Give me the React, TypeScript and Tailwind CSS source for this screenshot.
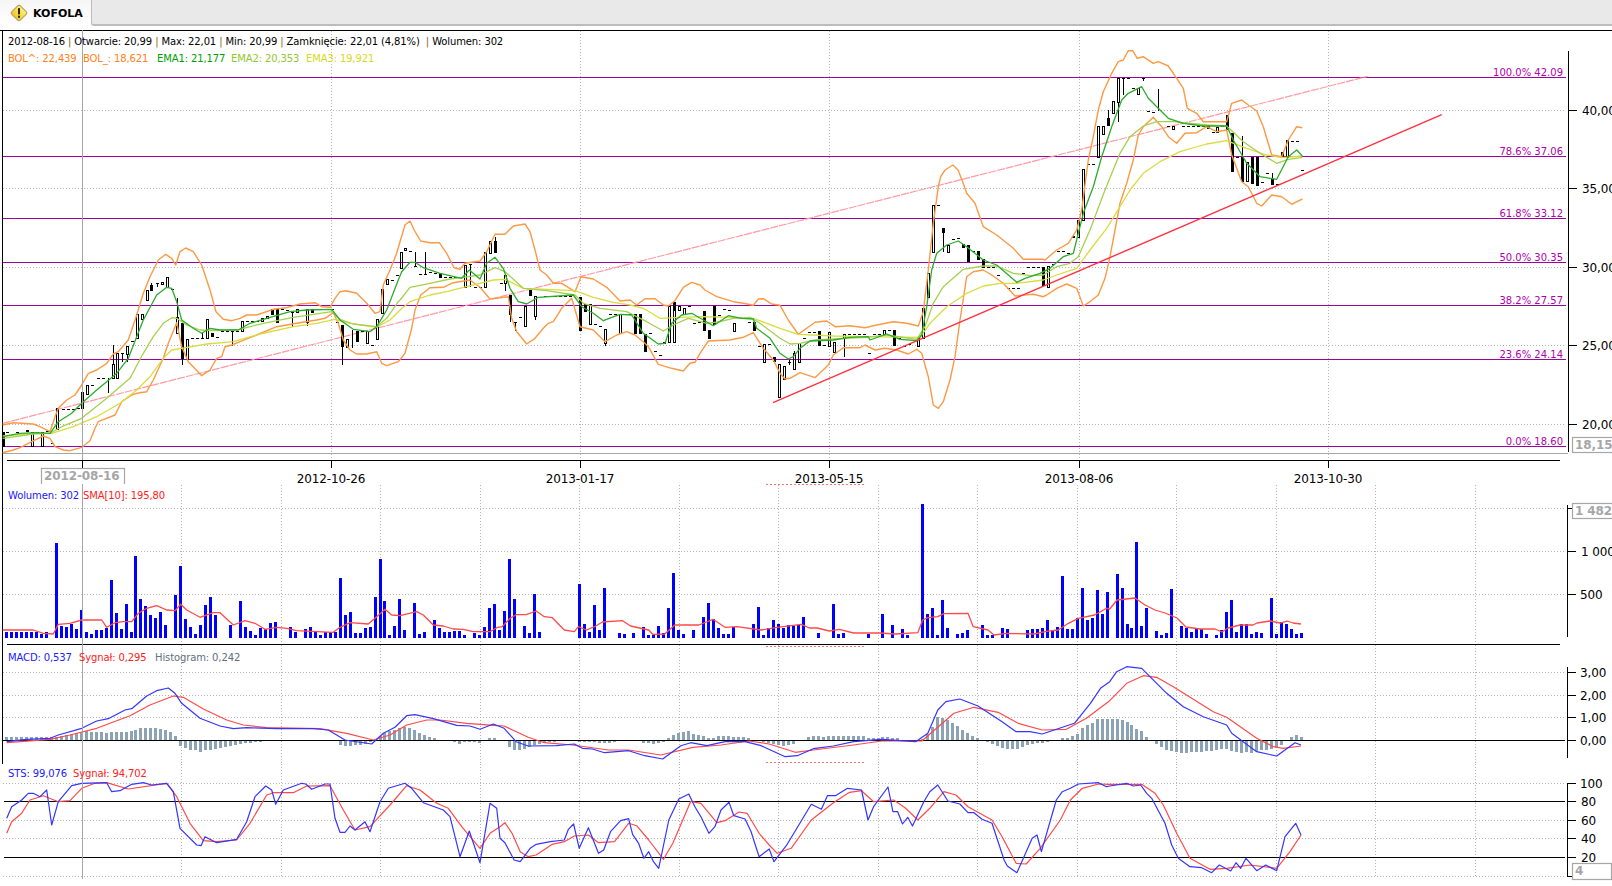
type Seg = [number, number, number, number, number[]]
type Mark = ["h" | "f" | "w" | "d", number, number, number?]

// each traced piece is [x0, y0, scaleX, scaleY, flat x,y list]; points that don't move right are dropped
function trace(...segs: Seg[]) {
  const out: string[] = []
  let last = -1
  for (const [x0, y0, kx, ky, p] of segs) {
    for (let i = 0; i < p.length; i += 2) {
      const x = x0 + p[i] / kx
      if (x <= last) continue
      last = x
      out.push(`${x.toFixed(1)},${(y0 + p[i + 1] / ky).toFixed(1)}`)
    }
  }
  return out.join(" ")
}

const bolUp = trace(
  [0, 230, 3, 3, [8,585,40,578,100,582,120,590,150,605,165,560,175,535,200,510,225,495,245,465,265,430,290,420,320,400,340,372,355,365,385,330,410,255,430,190,450,140,475,90,497,73,515,85,527,105,540,65,557,54,580,65,605,105,630,180,648,245,670,268,695,272,720,265,740,255,770,255,820,238,860,233,900,222,945,218,965,230,990,232,1005,205,1020,185,1037,182,1070,190,1100,220,1125,250,1140,245,1150,165,1170,120,1190,70]],
  [380, 200, 3, 3, [60,125,75,75,90,63,105,95,122,123,150,128,178,128,200,160,222,203,240,208,255,190,300,183,320,155,345,103,375,103,400,78,435,72,450,95,465,150,480,210,500,225,520,250,545,250,585,275,603,230,640,237,680,262,720,303,750,300,770,315,795,296,825,296,850,315,865,318,885,302,910,262,935,247,960,255,975,270,1010,290,1060,305,1090,310,1120,316,1135,297,1150,296,1175,312,1200,316]],
  [700, 180, 3, 3, [240,375,265,420,295,463,320,445,345,427,380,423,405,440,450,437,495,443,530,435,580,425,620,430,655,438,670,395,685,270,700,130,715,20,722,-10,735,-30,759,-45,774,-30,786,0,800,40,825,70,850,140,890,165,940,205,970,238,1030,238]],
  [1040, 40, 3, 3, [15,660,50,630,85,610,110,570,125,510,145,360,160,290,175,210,190,155,215,100,235,65,250,60,265,32,278,32,292,55,310,50,340,70,355,65,385,78,410,115,430,145,442,205,470,220,490,245,560,245,575,190,605,180,625,195,650,213,670,260,695,345,725,350,745,300,770,260,787,263]],
)

const bolLow = trace(
  [0, 400, 3, 3, [8,158,40,150,60,143,95,125,130,108,150,115,165,140,190,150,210,152,245,142,270,122,285,85,295,65,345,45,365,5]],
  [0, 230, 3, 3, [395,495,410,490,440,485,460,450,490,385,505,340,530,278,545,350,565,395,605,437,630,420,650,385,665,380,675,350,695,345,720,335,770,315,830,290,890,280,950,270,975,265,1000,248,1015,280,1030,330,1050,360,1070,372,1100,372,1130,365,1145,400,1160,407,1195,395]],
  [380, 200, 3, 3, [75,460,95,385,105,330,122,285,150,263,190,262,220,248,270,240,300,262,330,297,385,290,395,355,410,395,440,432,465,415,490,385,505,370,520,365,545,325,575,295,600,380,640,390,675,425,710,405,740,395,765,405,795,430,805,440,835,493,875,505,910,513,930,490,945,487,960,460,985,423,1050,420,1090,412,1120,398,1150,445,1180,480,1200,520]],
  [700, 180, 3, 3, [255,597,270,595,300,578,345,593,385,555,400,525,430,503,480,503,495,495,525,510,555,505,590,510,625,522,650,508,665,520,685,590,700,675,715,685,730,665,750,600,765,530,780,420,800,290,820,275,850,270,875,285,910,310,945,348,1000,343,1030,350]],
  [1040, 40, 3, 3, [20,765,50,745,80,732,110,745,130,798,150,785,175,765,195,715,210,650,225,570,240,490,260,430,280,360,295,285,310,260,340,232,365,260,385,290,410,310,435,280,470,278,500,260,530,275,560,270,575,345,605,425,625,440,650,490,665,498,695,465,725,470,755,493,787,477]],
)

const ema1 = trace(
  [0, 230, 3, 3, [8,620,60,610,110,608,150,610,175,575,215,550,245,520,290,480,320,455,350,430,385,385,410,320,430,270,470,195,500,172,515,175,530,215,545,270,580,295,605,310,630,295,660,300,715,300,750,280,800,265,870,245,920,240,995,238,1020,270,1060,298,1110,305,1130,290,1160,240,1195,150]],
  [380, 200, 3, 3, [65,215,90,187,105,187,130,203,180,220,245,235,268,210,300,237,320,190,345,172,370,205,390,265,415,305,440,312,475,292,580,285,605,320,640,340,670,362,720,343,755,345,790,400,835,432,855,430,875,370,905,345,935,340,1000,377,1045,347,1085,355,1120,357,1130,385,1170,415,1200,460]],
  [700, 180, 3, 3, [265,537,280,530,300,505,330,483,400,480,450,472,505,470,510,480,560,462,600,478,650,482,665,465,680,380,695,270,710,220,740,195,775,183,800,200,850,240,890,255,950,307,975,295,1020,280]],
  [1040, 40, 3, 3, [30,685,70,650,100,640,130,520,160,440,185,350,215,260,245,180,265,160,305,140,325,175,360,210,385,235,430,250,490,258,560,258,580,300,620,370,660,410,710,418,745,350,770,330,787,348]],
)

const ema2 = trace(
  [0, 230, 3, 3, [8,625,100,612,150,610,185,590,245,565,320,505,390,445,430,370,460,320,490,280,515,263,530,265,560,285,600,300,650,302,720,298,790,280,880,262,960,250,995,245,1020,268,1060,282,1130,290,1160,265,1195,215]],
  [380, 200, 3, 3, [60,300,90,262,150,250,210,237,250,232,300,225,345,203,375,215,430,265,500,272,585,285,610,310,660,325,740,335,800,365,850,393,880,375,925,355,980,370,1020,365,1060,355,1110,352,1140,370,1200,415]],
  [700, 180, 3, 3, [270,492,300,490,345,480,430,475,500,472,560,465,650,478,675,440,700,370,730,320,790,268,850,258,890,258,940,280,990,287,1030,285]],
  [1040, 40, 3, 3, [50,680,90,670,115,650,150,570,195,450,240,340,270,290,310,258,350,245,400,245,500,255,560,258,610,305,660,340,710,370,745,358,787,352]],
)

const ema3 = trace(
  [0, 230, 3, 3, [8,618,100,610,155,610,220,590,290,560,360,520,410,480,450,440,490,385,515,360,545,355,620,342,700,335,780,312,880,290,950,280,1005,268,1050,280,1130,292,1170,270,1195,245]],
  [380, 200, 3, 3, [60,330,90,305,150,285,200,275,250,262,300,250,340,240,375,238,430,265,500,268,585,272,640,292,700,307,750,315,790,325,840,355,900,352,970,350,1060,352,1120,355,1200,385]],
  [700, 180, 3, 3, [295,463,400,468,500,470,660,472,690,430,740,380,800,340,850,318,900,310,950,310,1030,300]],
  [1040, 40, 3, 3, [50,705,110,685,150,630,200,565,240,500,270,450,310,400,360,365,420,335,500,312,560,302,620,325,680,345,725,353,787,348]],
)

const sma = trace(
  [0, 400, 3, 3, [8,690,40,690,100,690,130,700,160,702,175,673,210,670,245,660,305,660,320,682,345,668,370,665,395,665,415,640,440,625,470,617,500,630,525,632,542,613,560,630,600,652,640,638,660,638,700,675,735,662,765,670,795,688,830,682,860,685,890,692,950,695,1000,697,1020,682,1050,668,1105,672,1130,650,1155,628,1175,645,1200,647,1250,635,1270,645,1300,675,1330,678,1360,687,1390,688,1420,695,1470,695,1490,683]],
  [480, 490, 2.49, 3, [55,410,75,385,90,374,115,374,140,363,160,380,180,383,210,420,235,425,245,410,265,420,285,410,305,396,355,392,375,408,420,420,430,433,460,432,485,405,545,405,580,388,610,412,640,410,700,420,740,412,800,403,820,414,840,414,870,423,895,418,930,429,995,429,1035,432,1090,428,1102,390,1115,383,1140,380,1155,371,1215,370,1228,410,1265,420,1280,435,1310,430,1380,432,1410,424,1440,420,1465,400,1490,385,1530,375,1560,355,1568,357]],
  [0, 0, 1, 1, [1117,600,1135,598,1145,605,1155,610,1165,613,1177,618,1186,627,1200,629,1215,629,1222,632,1228,628,1240,625,1253,625,1257,623,1270,621,1280,623,1287,621,1293,623,1301,624]],
)

const macd = trace(
  [0, 620, 3, 3, [20,365,80,358,150,355,175,345,245,325,290,303,325,296,375,270,395,266,440,228,470,212,505,204,525,220,545,250,600,295,660,318,700,326,740,323,830,326,940,326,985,330,1035,360,1115,372,1150,340,1185,322,1220,287,1245,284,1300,296,1370,316,1410,318,1440,328,1480,312]],
  [480, 660, 2.49, 3, [60,205,90,245,120,258,190,257,235,252,255,265,280,267,310,278,370,272,410,287,455,297,500,257,525,248,565,257,610,245,660,245,700,257,760,290,790,287,830,266,880,258,930,245,1000,238,1085,245,1115,220,1140,150,1160,125,1195,117,1240,138,1300,185,1335,215,1370,215,1400,222,1480,190,1520,130,1545,85,1568,65]],
  [1100, 620, 3, 3, [50,155,80,140,125,145,200,220,250,260,310,290,380,315,395,340,470,395,530,408,585,368,603,375]],
)

const macdSig = trace(
  [0, 620, 3, 3, [20,368,150,358,210,345,290,325,390,287,450,255,520,228,550,232,610,267,680,300,730,315,800,323,960,326,1040,340,1120,360,1170,345,1220,315,1280,300,1320,300,1400,310,1480,316]],
  [480, 660, 2.49, 3, [60,198,120,232,160,248,230,255,320,270,370,270,450,285,530,262,600,255,670,243,720,252,785,277,830,270,930,255,1000,243,1100,243,1180,160,1230,142,1290,157,1340,190,1400,210,1460,208,1510,175,1568,122]],
  [1100, 620, 3, 3, [80,190,130,167,170,172,220,200,340,275,380,292,470,355,520,380,550,385,603,378]],
)

const sts = trace(
  [0, 620, 3, 3, [20,595,35,560,65,540,85,520,100,520,120,530,140,510,155,615,175,545,215,497,245,490,320,488,335,515,360,512,395,493,430,488,455,495,500,490,520,515,540,625,590,675,603,677,615,650,650,668,710,658,740,605,765,530,797,498,815,510,827,553,850,510,905,490,917,492,935,508,975,492,990,492,1005,595,1020,637,1035,637,1050,618,1065,630,1095,605,1110,635,1140,545,1165,505,1215,490,1235,505,1270,548,1330,570,1350,590,1380,710,1408,633,1440,728,1470,550,1490,565,1500,655]],
  [480, 660, 2.49, 3, [62,548,85,600,100,605,125,565,140,553,175,545,210,540,220,508,233,492,247,565,270,503,295,580,308,570,325,515,350,482,370,476,380,523,395,550,408,595,420,575,432,605,445,625,470,480,495,417,520,402,535,440,550,470,570,520,585,500,600,450,620,427,632,467,660,477,675,515,695,590,720,567,732,605,765,553,825,433,850,448,865,407,885,407,915,385,950,390,966,480,980,440,1016,381,1028,455,1040,455,1052,492,1065,472,1077,498,1105,425,1120,395,1140,375,1165,423,1195,432,1215,458,1230,458,1250,478,1275,490,1305,600,1313,618,1337,638,1375,535,1387,525,1398,575,1435,420,1450,395,1470,385,1490,372,1540,368,1560,380,1568,378]],
  [1100, 620, 3, 3, [80,490,100,498,122,495,140,520,155,535,195,610,215,675,235,715,270,740,305,743,335,758,358,735,392,753,408,728,422,745,438,715,470,752,497,735,530,752,555,650,587,610,603,645]],
)

const stsSig = trace(
  [0, 620, 3, 3, [20,640,35,605,65,580,90,540,130,527,175,545,210,542,245,505,285,490,320,488,385,507,500,490,530,530,570,610,610,662,650,665,710,660,750,610,800,525,820,518,880,518,920,498,990,497,1030,570,1065,630,1110,620,1170,555,1220,497,1260,510,1310,550,1345,565,1385,620,1440,685,1470,640,1500,620]],
  [480, 660, 2.49, 3, [62,488,80,520,100,575,120,590,140,585,180,553,210,545,235,528,270,525,295,548,335,545,370,490,390,497,420,540,457,598,480,550,525,424,550,430,590,488,610,482,645,456,665,460,695,520,720,555,740,580,775,565,825,480,880,428,920,397,950,392,980,425,1030,420,1060,445,1090,480,1120,445,1155,395,1185,405,1215,440,1275,480,1300,530,1335,610,1360,612,1395,565,1445,480,1470,420,1500,385,1540,372,1568,373]],
  [1100, 620, 3, 3, [60,493,125,493,165,520,190,555,230,640,270,715,330,748,380,745,450,735,530,745,570,695,603,645]],
)

const volume = [
  6,6,6,6,6,6,6,4,6,0,95,12,11,14,9,28,6,4,8,8,10,58,25,9,34,6,82,39,32,23,20,26,13,0,43,72,19,11,4,13,
  33,41,23,0,0,13,0,37,11,7,3,10,9,15,16,0,0,11,6,0,9,11,7,3,6,6,6,60,23,26,5,5,10,11,41,79,37,3,12,39,
  8,0,35,4,6,0,18,10,6,6,7,7,3,0,5,3,11,30,34,8,27,79,39,0,12,5,44,6,0,0,0,0,0,0,0,54,14,6,33,8,
  50,0,0,5,4,0,5,0,11,3,3,12,5,30,65,8,4,0,8,0,21,35,19,10,4,4,11,0,0,0,14,31,3,10,18,14,10,13,12,13,
  21,0,0,5,0,0,34,4,5,0,0,0,0,4,0,0,24,0,13,0,9,3,0,0,134,24,30,3,38,10,0,4,5,8,0,0,13,3,3,0,
  10,9,0,0,0,8,9,9,10,18,8,11,62,9,9,20,50,18,20,48,24,46,0,64,50,14,10,96,12,30,0,7,3,5,49,0,12,10,6,9,
  9,4,0,3,8,26,38,6,14,14,4,6,5,0,40,4,16,14,9,4,5,
]

const hist = [
  3,3,3,3,3,3,3,3,3,3,3,4,5,6,7,8,9,8,8,8,7,8,8,8,8,9,10,12,12,12,12,11,10,8,4,-6,-8,-10,-10,-12,
  -10,-10,-9,-8,-7,-6,-5,-4,-3,-3,-2,-2,-1,0,-1,0,0,0,0,0,0,0,0,0,0,0,-1,-5,-6,-6,-5,-5,-4,-2,0,4,7,9,10,12,
  13,12,10,7,5,3,2,0,0,-1,-2,-4,-2,-2,-2,-3,-1,2,2,0,-1,-7,-10,-10,-9,-7,-5,-4,-3,-2,-2,-1,0,0,0,-2,-2,-2,-2,-3,
  -3,-3,-2,0,0,0,0,0,-3,-3,-4,-3,-2,2,5,7,8,9,6,5,4,2,2,4,4,4,3,3,3,2,0,-1,-2,-3,-4,-5,-6,-5,-4,-1,
  0,3,4,4,3,4,4,4,4,4,4,4,4,2,2,2,3,3,2,2,0,0,0,0,1,6,13,23,22,20,17,14,10,7,4,2,0,-2,-4,-6,
  -8,-9,-9,-9,-7,-5,-4,-3,-3,-2,-1,0,2,2,4,6,12,15,17,21,21,21,21,21,20,18,15,11,9,3,0,-4,-7,-10,-11,-12,-13,-13,-12,-12,
  -12,-11,-11,-10,-9,-9,-11,-12,-13,-12,-13,-11,-10,-10,-9,-8,-5,0,3,5,3,
]

const marks: [number, number, Mark[]][] = [
  [0, 230, [
    ["f",9,605,650],["d",22,607],["f",52,606,609],["f",82,601,605],["d",112,607],["d",142,602],["h",97,607,647],["h",127,607,647],["d",157,640],
    ["h",172,535,597],["d",188,538],["d",203,538],["d",218,538],["d",233,535],["f",247,487,537],["h",262,465,492],["d",277,465],["d",293,445],["d",308,445],["w",323,445,490],
    ["w",338,345,403],["h",338,403,445],["h",352,370,445],["w",367,370,395],["d",367,370],["h",382,347,372],["w",382,372,395],["d",397,333],["h",412,253,325],["h",425,253,267],
    ["h",440,180,210],["f",454,165,183],["w",454,160,165],["w",470,158,170],["d",470,158],["h",485,157,163],["h",500,140,170],["d",515,178],["w",530,205,260],["h",530,260,310],
    ["f",545,280,388],["w",545,388,405],["h",560,328,388],["f",575,323,328],["d",590,323],["w",605,310,325],["d",605,323],["h",620,268,325],["f",635,308,320],["d",650,320],
    ["d",665,302],["d",680,302],["w",695,302,348],["d",695,302],["d",710,302],["h",725,272,302],["d",740,272],["d",755,272],["d",770,272],["h",785,265,272],["h",800,259,265],
    ["f",815,238,255],["f",830,238,280],["d",845,238],["d",860,240],["w",875,245,290],["d",875,245],["h",890,238,245],["d",905,240],["h",920,238,275],["w",920,275,288],["f",935,238,248],
    ["d",950,238],["d",965,238],["d",980,238],["d",995,238],["d",1010,277],["f",1025,285,352],["w",1025,352,405],["h",1040,328,350],["w",1055,300,355],["f",1070,302,335],["d",1085,302],
    ["h",1100,302,340],["d",1115,345],["h",1130,268,328],["h",1145,178,248],["h",1160,148,162],["d",1175,150],
  ]],
  [380, 200, [
    ["d",50,225],["h",62,157,203],["h",76,145,151],["d",90,153],["w",106,155,200],["f",105,197,202],["d",120,222],["w",136,157,222],["d",136,222],["d",150,217],["f",166,220,223],["f",180,218,233],
    ["d",195,232],["d",210,232],["d",226,232],["d",240,232],["h",255,195,260],["w",270,192,260],["d",270,192],["d",285,260],["d",300,260],["h",316,155,260],["h",331,122,160],["f",346,122,158],["w",346,112,122],
    ["d",362,250],["h",376,225,250],["w",376,250,272],["f",391,285,345],["w",391,345,365],["w",406,365,393],["d",406,365],["d",421,352],["h",436,317,377],["f",451,270,288],["h",466,287,348],["w",466,348,360],
    ["d",495,287],["d",510,287],["d",525,287],["d",540,287],["d",555,287],["d",570,287],["f",601,290,392],["f",616,312,335],["h",631,312,373],["d",646,373],["d",661,377],["h",676,388,430],["w",676,430,437],
    ["d",691,343],["d",706,343],["h",721,343,400],["d",736,343],["d",751,343],["f",766,343,402],["f",781,343,402],["f",796,402,455],["d",811,398],["d",826,453],["d",840,466],["f",852,425,433],["h",868,318,425],
    ["f",883,305,330],["h",883,330,425],["h",898,318,330],["h",913,325,343],["d",928,318],["d",943,370],["d",958,367],["f",973,332,392],["f",988,390,417],["f",1003,318,375],["d",1018,345],["d",1033,328],["d",1048,330],
    ["h",1063,370,392],["d",1108,367],["f",1123,367,393],["d",1138,438],["h",1153,433,485],["d",1168,433],["f",1183,472,485],
  ]],
  [700, 180, [
    ["h",238,553,652],["h",253,558,598],["w",268,540,555],["d",268,547],["h",283,520,568],["w",283,513,520],["h",298,488,545],["d",313,475],["d",328,455],["d",343,455],["f",358,453,497],["d",373,495],["h",388,455,497],["h",403,487,515],
    ["d",418,475],["h",433,463,475],["w",433,475,530],["d",448,463],["d",463,463],["d",478,463],["d",493,463],["d",508,520],["d",523,463],["d",538,463],["h",553,450,463],["d",568,450],["f",583,450,497],["d",598,473],["d",613,497],["d",628,493],
    ["h",655,470,497],["h",670,385,475],["h",685,280,350],["h",700,75,215],["d",715,75],["f",730,145,158],["w",730,158,215],["h",745,195,215],["d",760,177],["d",775,173],["f",790,193,205],["f",805,195,245],["d",820,213],
    ["f",835,213,240],["f",850,238,265],["d",865,262],["d",880,262],["d",895,285],["d",910,308],["d",925,323],["d",940,325],["d",955,325],["d",970,280],["d",985,262],["d",1000,262],["d",1015,262],
  ]],
  [1040, 40, [
    ["f",10,680,738],["h",25,677,740],["d",40,673],["d",55,633],["d",70,633],["d",85,640],["f",100,589,593],["h",115,540,590],["h",130,388,540],["d",145,372],["d",160,372],["h",175,257,352],["h",190,258,282],
    ["f",205,233,258],["w",205,210,233],["h",220,183,218],["h",235,115,185],["w",235,185,245],["w",250,115,165],["d",250,115],["d",265,115],["d",280,145],["h",295,143,163],["w",310,115,122],["d",310,115],["d",325,213],["d",340,215],["w",355,148,213],
    ["d",370,242],["f",385,257,262],["h",400,258,268],["d",430,258],["d",445,258],["d",460,258],["d",475,258],["d",490,258],["f",503,255,268],["d",518,275],["h",532,260,277],["d",547,258],["f",562,225,270],["f",577,280,395],["d",592,352],
    ["w",607,288,352],["f",607,352,425],["h",622,365,422],["f",637,352,433],["f",652,350,437],["d",667,425],["d",682,400],["f",697,418,435],["w",697,400,418],["d",712,433],["f",727,335,352],["h",742,300,350],["d",757,303],["d",772,303],["d",787,390],
  ]],
]

const fib = [
  [77, "100.0% 42.09"],
  [156, "78.6% 37.06"],
  [218, "61.8% 33.12"],
  [262, "50.0% 30.35"],
  [305, "38.2% 27.57"],
  [359, "23.6% 24.14"],
  [446, "0.0% 18.60"],
] as const

const priceGrid: [number, string][] = [[110, "40,00"], [188, "35,00"], [267, "30,00"], [345, "25,00"], [424, "20,00"]]
const mainCols = [331, 580, 829, 1079, 1328]
const dates = ["2012-10-26", "2013-01-17", "2013-05-15", "2013-08-06", "2013-10-30"]
const subCols = Array.from({ length: 14 }, (_, i) => Math.round(181 + 99.5 * i))

const GREY = "#a6a6a6"
const DOT = "#b4b4b4"

function HDot({ y, x1 = 3, x2 = 1566 }: { y: number; x1?: number; x2?: number }) {
  return <line x1={x1} x2={x2} y1={y + 0.5} y2={y + 0.5} stroke={DOT} strokeDasharray="1 2" />
}

function VDot({ x, y1, y2 }: { x: number; y1: number; y2: number }) {
  return <line x1={x + 0.5} x2={x + 0.5} y1={y1} y2={y2} stroke={DOT} strokeDasharray="1 2" />
}

function Rule({ x1, y1, x2, y2, color = "#000" }: { x1: number; y1: number; x2: number; y2: number; color?: string }) {
  return <line x1={x1} y1={y1} x2={x2} y2={y2} stroke={color} shapeRendering="crispEdges" />
}

function Curve({ points, color, width = 1.2 }: { points: string; color: string; width?: number }) {
  return <polyline points={points} fill="none" stroke={color} strokeWidth={width} strokeLinejoin="round" />
}

function AxisLabel({ x, y, children }: { x: number; y: number; children: string }) {
  return (
    <text x={x} y={y + 5} fill="#000" className="text-[12px]">
      {children}
    </text>
  )
}

function GreyBox({ x, y, w, h, children, open }: { x: number; y: number; w: number; h: number; children: string; open?: boolean }) {
  return (
    <g>
      <rect x={x + 0.5} y={y + 0.5} width={w} height={open ? h + 4 : h} fill="#fff" stroke={GREY} strokeWidth={1.2} />
      <text x={x + 3} y={y + 12} fill={GREY} className="text-[12px] font-bold">
        {children}
      </text>
    </g>
  )
}

function Candles() {
  const shapes: React.ReactNode[] = []
  marks.forEach(([x0, y0, list], s) =>
    list.forEach(([kind, mx, a, b], i) => {
      const x = Math.round(x0 + mx / 3)
      const top = Math.round(y0 + a / 3)
      const bot = b === undefined ? top : Math.round(y0 + b / 3)
      const key = `${s}-${i}`
      if (kind === "h") shapes.push(<rect key={key} x={x - 0.5} y={top + 0.5} width={2} height={bot - top} fill="none" stroke="#000" />)
      if (kind === "f") shapes.push(<rect key={key} x={x - 1} y={top} width={3} height={bot - top} fill="#000" />)
      if (kind === "w") shapes.push(<rect key={key} x={x} y={top} width={1} height={bot - top} fill="#000" />)
      if (kind === "d") shapes.push(<rect key={key} x={x - 1} y={top} width={3} height={1} fill="#000" />)
    }),
  )
  return <g shapeRendering="crispEdges">{shapes}</g>
}

function MainChart() {
  return (
    <svg className="block" width={1612} height={454} viewBox="0 30 1612 454">
      {priceGrid.map(([y]) => <HDot key={y} y={y} />)}
      {mainCols.map((x) => <VDot key={x} x={x} y1={31} y2={460} />)}
      <Rule x1={0} y1={30.5} x2={1612} y2={30.5} />
      <Rule x1={2.5} y1={30} x2={2.5} y2={484} />
      {fib.map(([y, label]) => (
        <g key={y}>
          <Rule x1={3} y1={y + 0.5} x2={1566} y2={y + 0.5} color="#a000a0" />
          <text x={1563} y={y - 1} textAnchor="end" fill="#b000b0" className="text-[10px] tracking-[0px]">
            {label}
          </text>
        </g>
      ))}
      <line x1={2.7} y1={423.3} x2={1367.7} y2={76.3} stroke="#ff9aa3" strokeWidth={1.2} strokeDasharray="8 1" />
      <Candles />
      <Curve points={bolUp} color="#fb9a45" width={1.4} />
      <Curve points={bolLow} color="#fb9a45" width={1.4} />
      <Curve points={ema3} color="#d9dc3f" width={1.3} />
      <Curve points={ema2} color="#a5d04e" width={1.3} />
      <Curve points={ema1} color="#2cab2c" width={1.3} />
      <line x1={773} y1={402.7} x2={1441.7} y2={114.7} stroke="#ff3040" strokeWidth={1.4} />
      <Rule x1={82.5} y1={30} x2={82.5} y2={484} color={GREY} />
      <Rule x1={3} y1={453.5} x2={1568} y2={453.5} color={GREY} />
      <Rule x1={1568.5} y1={51} x2={1568.5} y2={452} />
      {priceGrid.map(([y, label]) => (
        <g key={y}>
          <Rule x1={1568} y1={y + 0.5} x2={1577} y2={y + 0.5} />
          <AxisLabel x={1582} y={y}>{label}</AxisLabel>
        </g>
      ))}
      <Rule x1={7} y1={460.5} x2={1560} y2={460.5} />
      {[82, ...mainCols].map((x) => <Rule key={x} x1={x + 0.5} y1={460} x2={x + 0.5} y2={468} />)}
      {mainCols.map((x, i) => (
        <text key={x} x={x} y={483} textAnchor="middle" fill="#000" className="text-[12px] tracking-[-0.1px]">
          {dates[i]}
        </text>
      ))}
      <GreyBox x={1572} y={437} w={44} h={15}>18,15</GreyBox>
      <GreyBox x={41} y={468} w={83} h={16} open>2012-08-16</GreyBox>
    </svg>
  )
}

function VolumeChart() {
  return (
    <svg className="block" width={1612} height={160} viewBox="0 484 1612 160">
      {[508, 551, 594].map((y) => <HDot key={y} y={y} />)}
      {subCols.map((x) => <VDot key={x} x={x} y1={485} y2={644} />)}
      <Rule x1={2.5} y1={484} x2={2.5} y2={644} />
      <line x1={766} x2={865} y1={484.5} y2={484.5} stroke="#ff7070" strokeDasharray="2 2" />
      <g shapeRendering="crispEdges">
        {volume.map((h, i) => h > 0 && <rect key={i} x={Math.round(6 + 4.98 * i) - 1} y={638 - h} width={3} height={h} fill="#0000ff" />)}
      </g>
      <Curve points={sma} color="#ff4a4a" width={1.3} />
      <Rule x1={82.5} y1={484} x2={82.5} y2={644} color={GREY} />
      <Rule x1={1567.5} y1={505} x2={1567.5} y2={637} />
      <Rule x1={1567} y1={508.5} x2={1572} y2={508.5} />
      <Rule x1={1567} y1={551.5} x2={1576} y2={551.5} />
      <Rule x1={1567} y1={594.5} x2={1576} y2={594.5} />
      <AxisLabel x={1581} y={551}>1 000</AxisLabel>
      <AxisLabel x={1580} y={594}>500</AxisLabel>
      <GreyBox x={1572} y={503} w={44} h={15}>1 482</GreyBox>
    </svg>
  )
}

function MacdChart() {
  return (
    <svg className="block" width={1612} height={120} viewBox="0 644 1612 120">
      {[672, 695, 717].map((y) => <HDot key={y} y={y} />)}
      {subCols.map((x) => <VDot key={x} x={x} y1={645} y2={764} />)}
      <Rule x1={2.5} y1={644} x2={2.5} y2={764} />
      <Rule x1={7} y1={644.5} x2={1560} y2={644.5} />
      <g shapeRendering="crispEdges">
        {hist.map((v, i) => v !== 0 && (
          <rect key={i} x={Math.round(6 + 4.98 * i) - 1} y={v > 0 ? 740 - v : 740} width={3} height={Math.abs(v)} fill="#8ca3b5" />
        ))}
      </g>
      <Rule x1={3} y1={740.5} x2={1565} y2={740.5} />
      <Curve points={macdSig} color="#ff4a4a" />
      <Curve points={macd} color="#3535ff" />
      <line x1={766} x2={865} y1={646.5} y2={646.5} stroke="#ff7070" strokeDasharray="2 2" />
      <line x1={766} x2={865} y1={762.5} y2={762.5} stroke="#ff7070" strokeDasharray="2 2" />
      <Rule x1={82.5} y1={644} x2={82.5} y2={764} color={GREY} />
      <Rule x1={1567.5} y1={667} x2={1567.5} y2={758} />
      {[[672, "3,00"], [695, "2,00"], [717, "1,00"], [740, "0,00"]].map(([y, label]) => (
        <g key={label}>
          <Rule x1={1567} y1={Number(y) + 0.5} x2={1576} y2={Number(y) + 0.5} />
          <AxisLabel x={1580} y={Number(y)}>{String(label)}</AxisLabel>
        </g>
      ))}
    </svg>
  )
}

function StsChart() {
  return (
    <svg className="block" width={1612} height={122} viewBox="0 764 1612 122">
      {[783, 820, 838, 876].map((y) => <HDot key={y} y={y} />)}
      {subCols.map((x) => <VDot key={x} x={x} y1={764} y2={878} />)}
      <Rule x1={4} y1={801.5} x2={1565} y2={801.5} />
      <Rule x1={4} y1={857.5} x2={1565} y2={857.5} />
      <Curve points={stsSig} color="#ff4a4a" />
      <Curve points={sts} color="#3535ff" />
      <Rule x1={82.5} y1={764} x2={82.5} y2={879} color={GREY} />
      <Rule x1={1567.5} y1={783} x2={1567.5} y2={876} />
      {[[783, "100"], [801, "80"], [820, "60"], [838, "40"], [857, "20"]].map(([y, label]) => (
        <g key={label}>
          <Rule x1={1567} y1={Number(y) + 0.5} x2={1576} y2={Number(y) + 0.5} />
          <AxisLabel x={label === "100" ? 1580 : 1581} y={Number(y)}>{String(label)}</AxisLabel>
        </g>
      ))}
      <Rule x1={1567} y1={876.5} x2={1572} y2={876.5} />
      <GreyBox x={1572} y={863} w={39} h={16}>4</GreyBox>
    </svg>
  )
}

function WarningIcon() {
  return (
    <svg width="20" height="20" viewBox="0 0 18 18">
      <defs>
        <linearGradient id="warn" x1="0" y1="0" x2="0" y2="1">
          <stop offset="0" stopColor="#fff27a" />
          <stop offset="1" stopColor="#f2c51c" />
        </linearGradient>
      </defs>
      <rect x="3.6" y="3.6" width="10.8" height="10.8" rx="2" transform="rotate(45 9 9)" fill="url(#warn)" stroke="#b5a260" />
      <rect x="8.1" y="4.5" width="1.8" height="5.8" rx="0.6" fill="#222" />
      <rect x="8.1" y="11.4" width="1.8" height="1.9" fill="#222" />
    </svg>
  )
}

function Sep() {
  return <span className="text-[#8a5a20]">|</span>
}

export default function App() {
  return (
    <div className="h-[886px] w-[1612px] overflow-hidden bg-white font-['DejaVu_Sans',sans-serif] text-[10px] leading-none tracking-[-0.12px]">
      <div className="flex h-[26px]">
        <div className="flex w-[91px] items-center gap-[4px] bg-gradient-to-b from-[#f6f6f6] to-white pl-[9px]">
          <WarningIcon />
          <span className="text-[11px] font-bold tracking-normal">KOFOLA</span>
        </div>
        <div className="flex-1 rounded-bl-[3px] border-b-2 border-l border-[#bcbcbc] bg-[#e9e9e9]" />
      </div>
      <div className="h-[4px]" />

      <div className="relative h-[454px]">
        <MainChart />
        <div className="absolute left-[8px] top-[7px] flex flex-col gap-[7px] whitespace-pre">
          <div className="text-black">
            2012-08-16 <Sep /> Otwarcie: 20,99 <Sep /> Max: 22,01 <Sep /> Min: 20,99 <Sep /> Zamknięcie: 22,01 (4,81%)  <Sep /> Wolumen: 302
          </div>
          <div className="flex">
            <span className="w-[75px] text-[#ff8020]">BOL^: 22,439</span>
            <span className="w-[74px] text-[#ff8020]">BOL_: 18,621</span>
            <span className="w-[74px] text-[#00a000]">EMA1: 21,177</span>
            <span className="w-[75px] text-[#90c830]">EMA2: 20,353</span>
            <span className="text-[#d8d820]">EMA3: 19,921</span>
          </div>
        </div>
      </div>

      <div className="relative h-[160px]">
        <VolumeChart />
        <div className="absolute left-[8px] top-[7px] flex">
          <span className="w-[75px] text-[#2020ff]">Wolumen: 302</span>
          <span className="text-[#ff2020]">SMA[10]: 195,80</span>
        </div>
      </div>

      <div className="relative h-[120px]">
        <MacdChart />
        <div className="absolute left-[8px] top-[9px] flex">
          <span className="w-[71px] text-[#2020ff]">MACD: 0,537</span>
          <span className="w-[76px] text-[#ff2020]">Sygnał: 0,295</span>
          <span className="text-[#607080]">Histogram: 0,242</span>
        </div>
      </div>

      <div className="relative h-[122px]">
        <StsChart />
        <div className="absolute left-[8px] top-[5px] flex">
          <span className="w-[65px] text-[#2020ff]">STS: 99,076</span>
          <span className="text-[#ff2020]">Sygnał: 94,702</span>
        </div>
      </div>
    </div>
  )
}
